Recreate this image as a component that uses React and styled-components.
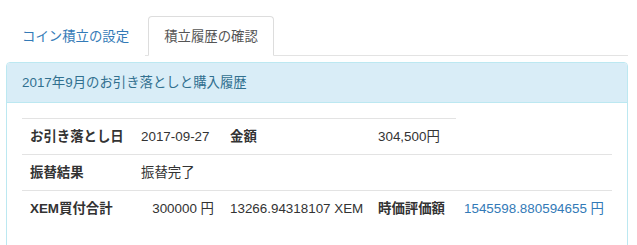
import React from "react";
import styled, { createGlobalStyle } from "styled-components";

const Global = createGlobalStyle`
  html, body { margin: 0; padding: 0; background: #fff; }
  body {
    font-family: "Liberation Sans", "Noto Sans CJK JP", sans-serif;
    font-size: 13.4px;
    line-height: 19px;
    color: #333;
  }
`;

const Page = styled.div`
  padding: 16px 9px 0 6px;
`;

const Tabs = styled.ul`
  display: flex;
  list-style: none;
  margin: 0;
  padding: 0;
  border-bottom: 1px solid #e3e3e3;
`;

const Tab = styled.li`
  margin-bottom: -1px;
  margin-right: 3px;
`;

const TabLink = styled.a`
  display: block;
  padding: 10px 15px 9px;
  border: 1px solid ${(p) => (p.$active ? "#ddd" : "transparent")};
  border-bottom-color: ${(p) => (p.$active ? "#fff" : "transparent")};
  border-radius: 4px 4px 0 0;
  background: #fff;
  color: ${(p) => (p.$active ? "#555" : "#337ab7")};
  text-decoration: none;
  cursor: pointer;
`;

const Panel = styled.div`
  margin-top: 6px;
  border: 1px solid #bce8f1;
  border-radius: 4px;
  background: #fff;
`;

const PanelHeading = styled.div`
  padding: 10px 15px;
  background: #d9edf7;
  color: #31708f;
  border-bottom: 1px solid #bce8f1;
  border-radius: 3px 3px 0 0;
`;

const PanelBody = styled.div`
  padding: 15px;
`;

const Table = styled.table`
  width: 100%;
  table-layout: fixed;
  border-collapse: collapse;
  margin-bottom: 20px;
`;

const Cell = styled.td`
  padding: 8px;
  border-top: 1px solid #e3e3e3;
  vertical-align: top;
  text-align: ${(p) => (p.$right ? "right" : "left")};
  font-weight: ${(p) => (p.$head ? "bold" : "normal")};
  color: ${(p) => (p.$link ? "#337ab7" : "#333")};
  white-space: nowrap;
`;

export default function App() {
  return (
    <>
      <Global />
      <Page>
        <Tabs>
          <Tab>
            <TabLink>コイン積立の設定</TabLink>
          </Tab>
          <Tab>
            <TabLink $active>積立履歴の確認</TabLink>
          </Tab>
        </Tabs>
        <Panel>
          <PanelHeading>2017年9月のお引き落としと購入履歴</PanelHeading>
          <PanelBody>
            <Table>
              <colgroup>
                <col style={{ width: 111 }} />
                <col style={{ width: 89 }} />
                <col style={{ width: 148 }} />
                <col style={{ width: 86 }} />
                <col />
              </colgroup>
              <tbody>
                <tr>
                  <Cell as="th" $head>お引き落とし日</Cell>
                  <Cell>2017-09-27</Cell>
                  <Cell as="th" $head>金額</Cell>
                  <Cell>304,500円</Cell>
                </tr>
                <tr>
                  <Cell as="th" $head>振替結果</Cell>
                  <Cell colSpan={4}>振替完了</Cell>
                </tr>
                <tr>
                  <Cell as="th" $head>XEM買付合計</Cell>
                  <Cell $right>300000 円</Cell>
                  <Cell>13266.94318107 XEM</Cell>
                  <Cell as="th" $head>時価評価額</Cell>
                  <Cell $link>1545598.880594655 円</Cell>
                </tr>
              </tbody>
            </Table>
          </PanelBody>
        </Panel>
      </Page>
    </>
  );
}
